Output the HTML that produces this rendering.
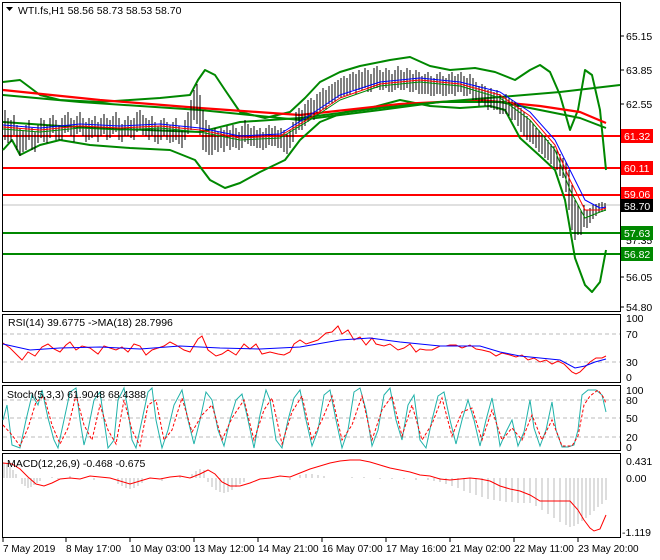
<!DOCTYPE html>
<html><head><style>
html,body{margin:0;padding:0;background:#fff;}
svg{display:block;font-family:"Liberation Sans",sans-serif;font-size:10.5px;}
</style></head><body>
<svg width="660" height="560" viewBox="0 0 660 560" xmlns="http://www.w3.org/2000/svg">
<rect width="660" height="560" fill="#fff"/>
<g fill="none" stroke="#000" stroke-width="1">
<rect x="2.5" y="2.5" width="618" height="309"/>
<rect x="2.5" y="314.5" width="618" height="68"/>
<rect x="2.5" y="385.5" width="618" height="65"/>
<rect x="2.5" y="453.5" width="618" height="84"/>
</g>
<g fill="none" stroke-linejoin="round">
<line x1="3" y1="205" x2="620" y2="205" stroke="#c0c0c0"/>
<line x1="3" y1="136" x2="620" y2="136" stroke="#f00" stroke-width="2"/>
<line x1="3" y1="168" x2="620" y2="168" stroke="#f00" stroke-width="2"/>
<line x1="3" y1="195" x2="620" y2="195" stroke="#f00" stroke-width="2"/>
<line x1="3" y1="233" x2="620" y2="233" stroke="#080" stroke-width="2"/>
<line x1="3" y1="254" x2="620" y2="254" stroke="#080" stroke-width="2"/>
<polyline stroke="#080" stroke-width="2" points="3,82 20,80 40,95 60,100 100,102 130,100 160,98 190,95 198,80 205,70 215,75 225,90 240,112 265,118 290,112 305,98 320,82 340,72 360,66 390,60 410,57 430,66 450,70 475,68 495,72 515,80 530,70 540,65 550,72 560,95 570,130 578,110 585,70 592,75 600,110 606,170"/>
<polyline stroke="#080" stroke-width="2" points="3,150 12,140 20,155 40,145 60,140 90,145 130,148 170,150 195,160 210,180 225,188 240,183 260,172 285,160 300,140 320,122 345,112 370,108 400,100 430,106 460,108 490,106 505,110 520,138 540,156 555,170 565,200 575,258 585,285 592,292 600,282 606,250"/>
<polyline stroke="#f00" stroke-width="2.2" points="3,90 100,100 200,108 300,115 400,104 480,100 540,106 580,112 606,123"/>
<polyline stroke="#080" stroke-width="2" points="3,95 80,102 200,110 300,120 380,110 440,102 500,97 560,92 620,85"/>
<polyline stroke="#080" stroke-width="2" points="3,122 60,126 120,129 200,132 240,122 300,118 380,108 440,102 500,102 540,110 580,118 606,128"/>
<path stroke="#000" stroke-width="1" d="M5,110v30 M8,118v25 M11,120v22 M14,115v20 M17,125v25 M20,128v28 M23,130v22 M26,125v25 M29,120v20 M32,128v22 M35,132v20 M38,125v18 M41,118v20 M44,120v22 M47,125v18 M50,118v20 M53,115v18 M56,120v20 M59,125v15 M62,118v22 M65,115v18 M68,112v20 M71,118v18 M74,120v22 M77,116v18 M80,112v20 M83,118v18 M86,122v20 M89,118v22 M92,120v18 M95,116v20 M98,122v20 M101,118v18 M104,114v20 M107,118v22 M110,120v18 M113,116v18 M116,112v20 M119,118v22 M122,124v18 M125,120v16 M128,116v20 M131,120v18 M134,118v22 M137,112v20 M140,110v20 M143,115v20 M146,118v18 M149,120v20 M152,116v20 M155,122v20 M158,126v18 M161,120v20 M164,118v18 M167,122v18 M170,125v18 M173,122v20 M176,118v22 M179,126v18 M182,130v18 M185,120v20 M188,112v22 M191,100v30 M194,90v30 M197,84v40 M200,95v40 M203,110v40 M206,120v32 M209,125v30 M212,130v25 M215,128v22 M218,132v20 M221,128v20 M224,130v22 M227,126v20 M230,130v20 M233,125v22 M236,128v20 M239,132v18 M242,126v22 M245,120v22 M248,124v20 M251,128v18 M254,126v20 M257,130v18 M260,128v20 M263,132v18 M266,128v20 M269,125v20 M272,128v18 M275,126v20 M278,130v18 M281,128v20 M284,130v22 M287,134v20 M290,130v18 M293,122v20 M296,112v22 M299,108v22 M302,110v20 M305,104v22 M308,100v22 M311,98v20 M314,100v20 M317,94v22 M320,92v20 M323,88v22 M326,90v20 M329,86v18 M332,84v20 M335,82v20 M338,80v18 M341,78v20 M344,76v20 M347,78v18 M350,74v20 M353,72v18 M356,74v20 M359,70v20 M362,72v18 M365,68v20 M368,70v22 M371,74v18 M374,68v20 M377,66v22 M380,70v20 M383,72v18 M386,68v20 M389,70v22 M392,74v18 M395,70v20 M398,66v22 M401,70v20 M404,72v18 M407,68v20 M410,70v22 M413,74v18 M416,70v20 M419,72v22 M422,76v18 M425,74v20 M428,72v22 M431,76v20 M434,78v18 M437,74v20 M440,72v22 M443,76v20 M446,78v18 M449,74v20 M452,72v22 M455,76v20 M458,74v18 M461,72v20 M464,76v20 M467,78v18 M470,74v20 M473,78v22 M476,82v18 M479,86v20 M482,84v18 M485,86v20 M488,90v20 M491,88v20 M494,92v18 M497,90v20 M500,94v20 M503,96v18 M506,94v20 M509,98v18 M512,100v20 M515,102v18 M518,104v22 M521,108v24 M524,112v24 M527,116v24 M530,120v22 M533,124v20 M536,128v20 M539,130v22 M542,134v20 M545,136v22 M548,140v20 M551,144v20 M554,146v22 M557,150v20 M560,154v22 M563,158v20 M566,162v30 M569,170v40 M572,185v45 M575,200v40 M578,205v30 M581,210v25 M584,205v22 M587,210v18 M590,208v15 M593,205v14 M596,204v12 M599,203v10 M602,202v10 M605,203v8"/>
<polyline stroke="#00f" stroke-width="1" points="3,125 40,128 80,124 120,126 160,124 200,128 240,136 280,134 310,115 340,95 380,82 420,78 460,82 500,92 530,112 555,140 570,170 585,200 600,208 606,207"/>
<polyline stroke="#f00" stroke-width="1" points="3,127 40,130 80,126 120,128 160,126 200,130 240,138 280,136 310,118 340,98 380,84 420,80 460,84 500,95 530,116 555,145 570,180 585,210 600,210 606,208"/>
<polyline stroke="#080" stroke-width="1" points="3,129 40,132 80,128 120,130 160,128 200,132 240,140 280,138 310,120 340,100 380,86 420,82 460,86 500,98 530,120 555,150 570,190 585,218 600,212 606,210"/>
</g>
<g font-size="10.5">
<path d="M6,7 L13,7 L9.5,11 Z" fill="#000"/>
<text x="18" y="14">WTI.fs,H1  58.56 58.73 58.53 58.70</text>
</g>
<g font-size="10.5" fill="#000">
<line x1="620" y1="36" x2="624" y2="36" stroke="#000"/><text x="626" y="40">65.15</text>
<line x1="620" y1="70" x2="624" y2="70" stroke="#000"/><text x="626" y="74">63.85</text>
<line x1="620" y1="104" x2="624" y2="104" stroke="#000"/><text x="626" y="108">62.55</text>
<text x="626" y="142">61.35</text>
<text x="626" y="175">60.10</text>
<text x="626" y="244">57.35</text>
<line x1="620" y1="277" x2="624" y2="277" stroke="#000"/><text x="626" y="281">56.05</text>
<line x1="620" y1="307" x2="624" y2="307" stroke="#000"/><text x="626" y="311">54.80</text>
<rect x="621" y="129" width="32" height="14" fill="#f00"/><text x="624" y="140" fill="#fff">61.32</text>
<rect x="621" y="161" width="32" height="14" fill="#f00"/><text x="624" y="172" fill="#fff">60.11</text>
<rect x="621" y="187" width="32" height="13" fill="#f00"/><text x="624" y="198" fill="#fff">59.06</text>
<rect x="621" y="199" width="32" height="13" fill="#000"/><text x="624" y="210" fill="#fff">58.70</text>
<rect x="621" y="226" width="32" height="14" fill="#080"/><text x="624" y="237" fill="#fff">57.63</text>
<rect x="621" y="247" width="32" height="14" fill="#080"/><text x="624" y="258" fill="#fff">56.82</text>
</g>
<g fill="none">
<line x1="3" y1="334" x2="620" y2="334" stroke="#bbb" stroke-dasharray="4,3"/>
<line x1="3" y1="362" x2="620" y2="362" stroke="#bbb" stroke-dasharray="4,3"/>
<polyline stroke="#f00" points="3,343 10,348 18,356 22,360 28,352 35,356 42,347 48,344 54,349 60,352 66,345 70,342 76,350 82,346 90,348 98,354 104,346 110,348 116,350 122,347 128,352 134,344 140,346 146,355 152,350 158,348 164,346 170,342 176,345 184,350 190,352 198,339 202,336 208,350 216,356 222,354 228,350 236,355 244,344 250,349 256,344 262,354 270,352 278,354 284,355 290,352 294,344 300,340 306,344 312,342 318,340 326,333 332,332 338,326 342,334 348,330 354,340 360,337 366,345 372,338 376,344 384,346 390,344 398,350 404,348 410,344 416,352 420,349 426,350 432,350 440,346 446,346 450,345 456,345 462,348 470,345 476,349 482,350 490,352 496,356 502,353 510,355 516,357 522,355 528,360 534,358 540,362 546,360 552,364 558,361 564,364 568,368 572,372 576,374 580,372 586,366 590,362 596,358 602,358 606,356"/>
<polyline stroke="#00f" points="3,344 30,350 60,348 100,347 140,349 180,346 220,348 260,349 300,347 340,340 370,338 400,342 440,346 480,346 500,352 520,356 540,358 560,360 575,368 585,366 595,362 606,359"/>
</g>
<g font-size="10.5"><text x="8" y="326">RSI(14) 39.6775  -&gt;MA(18) 28.7996</text></g>
<g font-size="10.5" fill="#000">
<text x="626" y="322">100</text><text x="626" y="338">70</text><text x="626" y="366">30</text><text x="626" y="381">0</text>
</g>
<g fill="none">
<line x1="3" y1="400" x2="620" y2="400" stroke="#bbb" stroke-dasharray="4,3"/>
<line x1="3" y1="418" x2="620" y2="418" stroke="#bbb" stroke-dasharray="4,3"/>
<line x1="3" y1="437" x2="620" y2="437" stroke="#bbb" stroke-dasharray="4,3"/>
<polyline stroke="#20b2aa" points="3,420 7,405 12,445 20,448 26,420 32,395 38,405 42,390 48,418 54,440 58,448 64,420 70,392 76,388 80,420 84,445 88,430 94,400 100,392 104,420 108,448 114,440 118,400 124,388 128,410 132,440 136,448 142,420 148,392 152,388 156,420 162,448 168,430 174,405 182,390 188,420 194,444 200,420 206,392 212,400 218,430 224,446 230,420 236,400 242,394 248,420 254,448 260,415 266,390 270,400 276,440 282,448 288,420 294,398 300,390 306,420 312,446 318,430 324,395 330,390 336,420 342,448 348,430 354,392 360,388 366,410 372,446 378,430 384,395 390,388 396,420 402,440 408,405 414,395 420,440 426,448 432,420 438,396 444,392 450,420 456,444 462,420 468,400 474,420 480,446 486,420 492,398 496,420 500,446 506,432 512,420 518,446 524,432 530,400 534,428 540,446 546,430 552,402 556,430 562,447 568,447 574,445 578,430 582,395 588,390 596,390 602,395 606,412"/>
<polyline stroke="#f00" stroke-dasharray="3,2" points="3,425 12,435 20,446 28,428 36,402 44,396 52,425 60,444 68,428 76,395 84,425 92,440 100,405 108,430 116,444 124,400 132,430 140,446 148,405 156,400 164,440 172,430 182,398 192,432 202,415 212,405 222,440 232,418 244,400 254,440 264,410 272,398 282,444 292,412 302,396 312,440 322,420 332,396 342,440 352,425 362,396 372,440 382,410 392,396 402,436 412,405 422,440 432,424 442,398 452,436 462,412 472,408 482,440 492,410 502,440 512,428 522,440 532,415 542,440 552,420 562,446 572,446 578,436 584,405 590,396 598,390 604,398 606,404"/>
</g>
<g font-size="10.5"><text x="7" y="398">Stoch(5,3,3) 61.9048 68.4388</text></g>
<g font-size="10.5" fill="#000">
<text x="626" y="394">100</text><text x="626" y="404">80</text><text x="626" y="422">50</text><text x="626" y="441">20</text><text x="626" y="451">0</text>
</g>
<g stroke="#bbb" stroke-width="1">
<path d="M4,478V463 M7,478V464 M10,478V467 M13,478V470 M16,478V474 M22,478V484 M25,478V486 M28,478V488 M31,478V487 M34,478V485 M37,478V483 M40,478V481 M52,478V477 M58,478V479 M70,478V476 M82,478V479 M94,478V480 M118,478V484 M122,478V486 M126,478V488 M130,478V489 M134,478V488 M138,478V486 M142,478V483 M162,478V481 M180,478V476 M192,478V474 M196,478V471 M200,478V469 M204,478V470 M208,478V482 M212,478V487 M216,478V490 M220,478V492 M224,478V493 M228,478V492 M232,478V490 M236,478V487 M240,478V484 M244,478V482 M290,478V480 M300,478V475 M306,478V474 M312,478V474 M318,478V475 M324,478V476 M352,478V477 M364,478V477 M380,478V479 M392,478V479 M404,478V479 M416,478V480 M428,478V480 M434,478V481 M440,478V482 M446,478V484 M452,478V486 M458,478V488 M464,478V491 M470,478V493 M476,478V495 M482,478V497 M488,478V499 M494,478V500 M500,478V501 M506,478V502 M512,478V502 M518,478V503 M524,478V503 M530,478V503 M536,478V506 M542,478V510 M548,478V514 M554,478V518 M560,478V522 M566,478V525 M570,478V527 M574,478V526 M578,478V524 M582,478V521 M586,478V518 M590,478V515 M594,478V511 M598,478V507 M602,478V504 M606,478V500"/>
</g>
<polyline fill="none" stroke="#f00" points="3,463 12,464 20,469 28,477 36,484 44,486 52,483 60,479 70,478 80,479 90,476 100,477 110,478 120,481 130,484 140,481 150,478 160,479 170,477 180,476 190,478 200,474 208,470 215,474 222,482 230,486 240,486 250,483 260,479 270,478 280,476 290,477 300,473 310,469 320,466 330,463 340,461 350,460 360,460 370,462 380,465 390,468 400,470 410,472 420,475 430,476 440,479 450,480 460,479 470,478 480,479 490,481 500,486 510,489 520,491 530,495 540,501 550,501 560,501 570,501 578,510 584,520 590,528 594,531 600,529 606,515"/>
<g font-size="10.5"><text x="7" y="467">MACD(12,26,9) -0.468 -0.675</text></g>
<g font-size="10.5" fill="#000">
<text x="626" y="465">0.431</text><text x="626" y="482">0.00</text><text x="622" y="536">-1.119</text>
</g>
<g stroke="#000">
<path d="M3,538v4 M66,538v4 M130,538v4 M194,538v4 M258,538v4 M322,538v4 M386,538v4 M450,538v4 M514,538v4 M578,538v4"/>
</g>
<g font-size="10" fill="#000">
<text x="3" y="552">7 May 2019</text>
<text x="66" y="552">8 May 17:00</text>
<text x="130" y="552">10 May 03:00</text>
<text x="194" y="552">13 May 12:00</text>
<text x="258" y="552">14 May 21:00</text>
<text x="322" y="552">16 May 07:00</text>
<text x="386" y="552">17 May 16:00</text>
<text x="450" y="552">21 May 02:00</text>
<text x="514" y="552">22 May 11:00</text>
<text x="578" y="552">23 May 20:00</text>
</g>
</svg>
</body></html>
